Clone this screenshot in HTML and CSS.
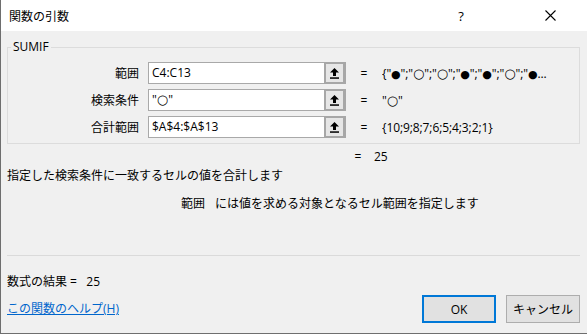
FILE: index.html
```html
<!DOCTYPE html>
<html lang="ja">
<head>
<meta charset="utf-8">
<title>関数の引数</title>
<link rel="stylesheet" href="styles.css">
</head>
<body>
<div class="dialog">
  <div class="titlebar">
    <span class="title">関数の引数</span>
    <span class="help">?</span>
    <span class="close"><svg width="11" height="11" viewBox="0 0 11 11"><path d="M0.5 0.5 L10.5 10.5 M10.5 0.5 L0.5 10.5" stroke="#000" stroke-width="1.1" fill="none"/></svg></span>
  </div>
  <div class="content">
    <fieldset class="group">
      <legend>SUMIF</legend>
      <div class="args">
        <label class="lbl">範囲</label>
        <div class="field"><span class="inp">C4:C13</span><span class="btn"><svg width="9" height="11" viewBox="0 0 9 11"><path d="M4.5 0 L9 4.5 H6 V8 H3 V4.5 H0 Z" fill="#000"/><rect x="0" y="9.3" width="9" height="1.5" fill="#000"/></svg></span></div>
        <span class="eq">=</span>
        <span class="val">{"<span class="bc">●</span>";"<span class="wc">○</span>";"<span class="wc">○</span>";"<span class="bc">●</span>";"<span class="bc">●</span>";"<span class="wc">○</span>";"<span class="bc">●</span>...</span>

        <label class="lbl">検索条件</label>
        <div class="field"><span class="inp">"<span class="wc">○</span>"</span><span class="btn"><svg width="9" height="11" viewBox="0 0 9 11"><path d="M4.5 0 L9 4.5 H6 V8 H3 V4.5 H0 Z" fill="#000"/><rect x="0" y="9.3" width="9" height="1.5" fill="#000"/></svg></span></div>
        <span class="eq">=</span>
        <span class="val">"<span class="wc">○</span>"</span>

        <label class="lbl">合計範囲</label>
        <div class="field"><span class="inp">$A$4:$A$13</span><span class="btn"><svg width="9" height="11" viewBox="0 0 9 11"><path d="M4.5 0 L9 4.5 H6 V8 H3 V4.5 H0 Z" fill="#000"/><rect x="0" y="9.3" width="9" height="1.5" fill="#000"/></svg></span></div>
        <span class="eq">=</span>
        <span class="val">{10;9;8;7;6;5;4;3;2;1}</span>
      </div>
    </fieldset>
    <div class="total"><span class="eq">=</span><span class="val">25</span></div>
    <p class="desc">指定した検索条件に一致するセルの値を合計します</p>
    <p class="argdesc"><span class="argname">範囲</span><span>には値を求める対象となるセル範囲を指定します</span></p>
    <hr class="divider">
    <p class="result">数式の結果 =&nbsp;&nbsp;&nbsp;25</p>
    <div class="footer">
      <a class="helplink" href="#">この関数のヘルプ(H)</a>
      <div class="buttons">
        <button class="ok">OK</button>
        <button class="cancel">キャンセル</button>
      </div>
    </div>
  </div>
</div>
</body>
</html>
```

FILE: styles.css
```css
* { box-sizing: border-box; }
html, body { margin: 0; padding: 0; }
body {
  font-family: "Open Sans", "Noto Sans CJK JP", sans-serif;
  font-size: 12px;
  color: #000;
  background: #f0f0f0;
}
.dialog {
  width: 587px;
  height: 334px;
  background: #f0f0f0;
  border-left: 1px solid #6e6e6e;
  border-bottom: 1px solid #6e6e6e;
  display: flex;
  flex-direction: column;
}
.titlebar {
  height: 31px;
  background: #fff;
  display: flex;
  align-items: center;
  padding-left: 8px;
}
.title { flex: 1; font-size: 12px; }
.help { width: 20px; text-align: center; font-size: 13px; margin-right: 69px; }
.close { width: 20px; display: flex; justify-content: center; margin-right: 27px; }
.content {
  flex: 1;
  display: flex;
  flex-direction: column;
  padding: 0 7px 0 6px;
}
.group {
  margin: 8px 0 0 0;
  padding: 7px 0 5px 0;
  border: 1px solid #dcdcdc;
  min-width: 0;
}
.group legend {
  padding: 0 2px;
  margin-left: 3px;
  line-height: 16px;
  height: 16px;
}
.args {
  display: grid;
  grid-template-columns: 131px 198px 18px 1fr;
  grid-auto-rows: 22px;
  column-gap: 9px;
  row-gap: 5px;
  align-items: center;
}
.lbl { text-align: right; }
.field {
  display: flex;
  height: 22px;
  border: 1px solid #a9a9a9;
  background: #fff;
}
.inp {
  flex: 1;
  padding-left: 3px;
  line-height: 20px;
  white-space: nowrap;
  overflow: hidden;
}
.btn {
  width: 22px;
  border: 2px solid #a7a7a7;
  border-right-width: 3px;
  margin: -1px -1px -1px 0;
  background: #e6e6e6;
  display: flex;
  align-items: center;
  justify-content: center;
}
.eq { text-align: center; }
.val { white-space: nowrap; overflow: hidden; letter-spacing: -0.1px; }
.bc, .wc {
  font-family: "DejaVu Sans", sans-serif;
  line-height: 1;
}
.bc { font-size: 11px; }
.wc { font-size: 13px; }
.total {
  display: flex;
  margin-top: 5px;
  height: 16px;
  line-height: 16px;
  padding-left: 342px;
}
.total .eq { width: 18px; margin-right: 7px; }
.desc { margin: 3px 0 0 0; line-height: 16px; height: 16px; }
.argdesc {
  margin: 12px 0 0 0;
  line-height: 16px;
  height: 16px;
  padding-left: 174px;
  display: flex;
  gap: 10px;
}
.divider {
  margin: 43px 0 0 0;
  border: 0;
  border-top: 1px solid #dadada;
  height: 0;
}
.result { margin: 18px 0 0 0; line-height: 16px; height: 16px; }
.footer {
  display: flex;
  justify-content: space-between;
  align-items: center;
  margin-top: 5px;
}
.helplink { color: #0066cc; text-decoration: underline; line-height: 16px; }
.buttons { display: flex; gap: 10px; }
.buttons button {
  font-family: "Open Sans", "Noto Sans CJK JP", sans-serif;
  font-size: 12px;
  width: 74px;
  height: 28px;
  background: #e1e1e1;
  border: 1px solid #adadad;
  color: #000;
  padding: 0;
}
.buttons .ok { border: 2px solid #0078d7; }
```
